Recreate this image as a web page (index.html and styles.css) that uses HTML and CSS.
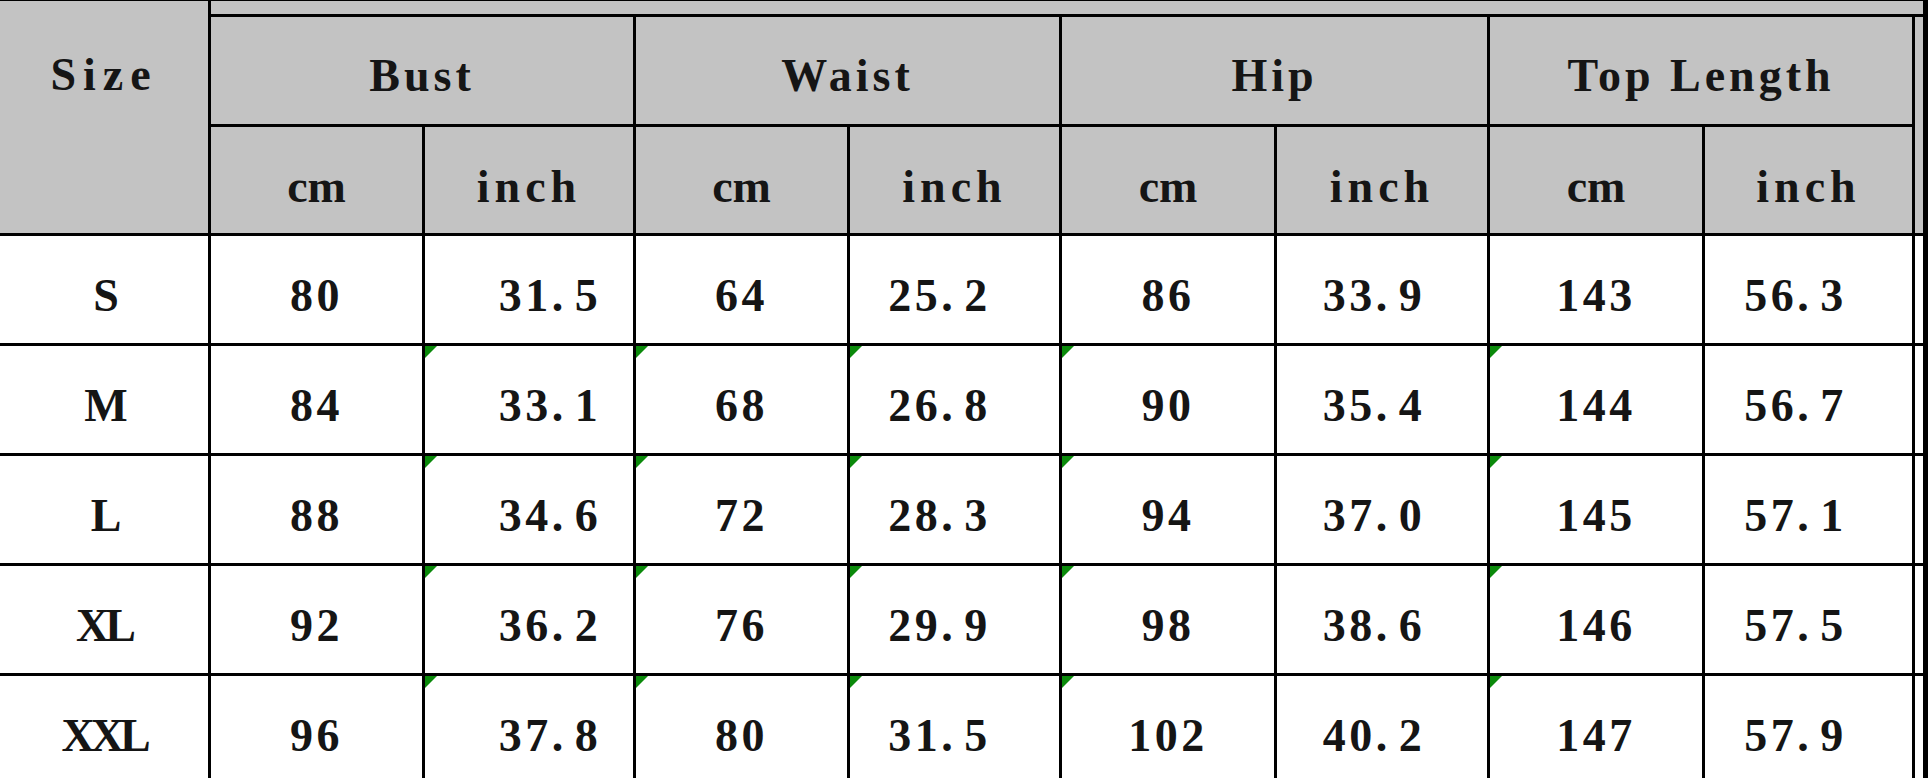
FILE: index.html
```html
<!DOCTYPE html>
<html>
<head>
<meta charset="utf-8">
<link rel="stylesheet" href="styles.css">
</head>
<body>
<div class="sheet">
  <div class="grid">
    <div class="c g size-h">Size</div>
    <div class="c g strip"></div>
    <div class="c g h span2">Bust</div>
    <div class="c g h span2">Waist</div>
    <div class="c g h span2">Hip</div>
    <div class="c g h span2">Top Length</div>
    <div class="c g edge-h"></div>

    <div class="c g sub cmh">cm</div>
    <div class="c g sub">inch</div>
    <div class="c g sub cmh">cm</div>
    <div class="c g sub">inch</div>
    <div class="c g sub cmh">cm</div>
    <div class="c g sub">inch</div>
    <div class="c g sub cmh">cm</div>
    <div class="c g sub">inch</div>

    <div class="c w d sz">S</div>
    <div class="c w d">80</div>
    <div class="c w d bi">31<span class="dot">.</span>5</div>
    <div class="c w d">64</div>
    <div class="c w d wi">25<span class="dot">.</span>2</div>
    <div class="c w d">86</div>
    <div class="c w d hi">33<span class="dot">.</span>9</div>
    <div class="c w d">143</div>
    <div class="c w d ti">56<span class="dot">.</span>3</div>
    <div class="c w d"></div>

    <div class="c w d sz">M</div>
    <div class="c w d">84</div>
    <div class="c w d bi tri">33<span class="dot">.</span>1</div>
    <div class="c w d tri">68</div>
    <div class="c w d wi tri">26<span class="dot">.</span>8</div>
    <div class="c w d tri">90</div>
    <div class="c w d hi">35<span class="dot">.</span>4</div>
    <div class="c w d tri">144</div>
    <div class="c w d ti">56<span class="dot">.</span>7</div>
    <div class="c w d"></div>

    <div class="c w d sz">L</div>
    <div class="c w d">88</div>
    <div class="c w d bi tri">34<span class="dot">.</span>6</div>
    <div class="c w d tri">72</div>
    <div class="c w d wi tri">28<span class="dot">.</span>3</div>
    <div class="c w d tri">94</div>
    <div class="c w d hi">37<span class="dot">.</span>0</div>
    <div class="c w d tri">145</div>
    <div class="c w d ti">57<span class="dot">.</span>1</div>
    <div class="c w d"></div>

    <div class="c w d sz">XL</div>
    <div class="c w d">92</div>
    <div class="c w d bi tri">36<span class="dot">.</span>2</div>
    <div class="c w d tri">76</div>
    <div class="c w d wi tri">29<span class="dot">.</span>9</div>
    <div class="c w d tri">98</div>
    <div class="c w d hi">38<span class="dot">.</span>6</div>
    <div class="c w d tri">146</div>
    <div class="c w d ti">57<span class="dot">.</span>5</div>
    <div class="c w d"></div>

    <div class="c w d sz">XXL</div>
    <div class="c w d">96</div>
    <div class="c w d bi tri">37<span class="dot">.</span>8</div>
    <div class="c w d tri">80</div>
    <div class="c w d wi tri">31<span class="dot">.</span>5</div>
    <div class="c w d tri">102</div>
    <div class="c w d hi">40<span class="dot">.</span>2</div>
    <div class="c w d tri">147</div>
    <div class="c w d ti">57<span class="dot">.</span>9</div>
    <div class="c w d"></div>
  </div>
</div>
</body>
</html>
```
FILE: styles.css
```css
html, body {
  margin: 0;
  padding: 0;
  background: #000;
}
body {
  width: 1928px;
  height: 778px;
  overflow: hidden;
}
.sheet {
  padding-top: 1px;
}
.grid {
  display: grid;
  grid-template-columns: 208px 211px 208px 211px 209px 212px 210px 212px 207px 8px;
  grid-template-rows: 13px 107px 106px repeat(5, 107px);
  gap: 3px;
  width: 1923px;
  background: #000;
  font-family: "Liberation Serif", "Times New Roman", serif;
  font-weight: bold;
  font-size: 46px;
  letter-spacing: 3.5px;
  color: #151515;
}
.c {
  position: relative;
  display: flex;
  align-items: center;
  justify-content: center;
  white-space: pre;
  box-sizing: border-box;
}
.g { background: #c3c3c3; }
.w { background: #fff; }
.size-h {
  grid-row: 1 / 4;
  grid-column: 1;
  padding-bottom: 86px;
  letter-spacing: 7px;
}
.strip {
  grid-row: 1;
  grid-column: 2 / 11;
}
.span2 { grid-column: span 2; }
.edge-h {
  grid-row: 2 / 4;
  grid-column: 10;
}
.h {
  padding-top: 9px;
  letter-spacing: 4px;
}
.sub {
  padding-top: 12px;
  letter-spacing: 5px;
}
.cmh {
  letter-spacing: 0;
}
.d {
  padding-top: 12px;
}
.sz {
  letter-spacing: -4px;
}
.dot {
  display: inline-block;
  width: 23px;
  letter-spacing: 0;
}
.bi { padding-left: 42px; }
.wi { padding-right: 30px; }
.hi { padding-right: 16px; }
.ti { padding-right: 26px; }
.tri::before {
  content: "";
  position: absolute;
  top: 0;
  left: 0;
  width: 0;
  height: 0;
  border-top: 12px solid #0b8a0b;
  border-right: 12px solid transparent;
}
```
